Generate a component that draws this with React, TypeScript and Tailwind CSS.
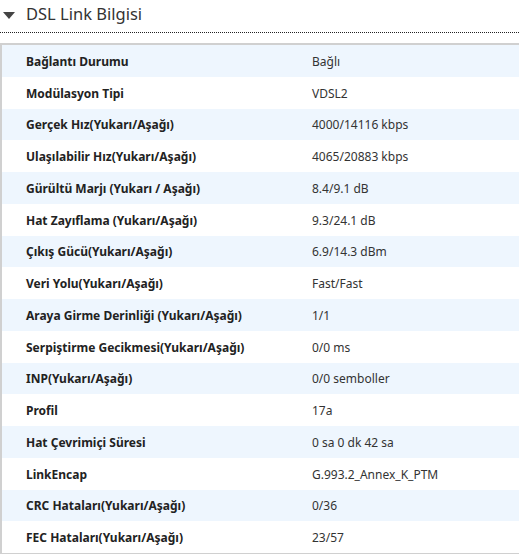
import React from "react";

const rows: [string, string][] = [
  ["Bağlantı Durumu", "Bağlı"],
  ["Modülasyon Tipi", "VDSL2"],
  ["Gerçek Hız(Yukarı/Aşağı)", "4000/14116 kbps"],
  ["Ulaşılabilir Hız(Yukarı/Aşağı)", "4065/20883 kbps"],
  ["Gürültü Marjı (Yukarı / Aşağı)", "8.4/9.1 dB"],
  ["Hat Zayıflama (Yukarı/Aşağı)", "9.3/24.1 dB"],
  ["Çıkış Gücü(Yukarı/Aşağı)", "6.9/14.3 dBm"],
  ["Veri Yolu(Yukarı/Aşağı)", "Fast/Fast"],
  ["Araya Girme Derinliği (Yukarı/Aşağı)", "1/1"],
  ["Serpiştirme Gecikmesi(Yukarı/Aşağı)", "0/0 ms"],
  ["INP(Yukarı/Aşağı)", "0/0 semboller"],
  ["Profil", "17a"],
  ["Hat Çevrimiçi Süresi", "0 sa 0 dk 42 sa"],
  ["LinkEncap", "G.993.2_Annex_K_PTM"],
  ["CRC Hataları(Yukarı/Aşağı)", "0/36"],
  ["FEC Hataları(Yukarı/Aşağı)", "23/57"],
];

export default function App() {
  return (
    <div
      className="w-[519px] h-[558px] bg-white overflow-hidden text-[#333]"
      style={{ fontFamily: '"Noto Sans", "Open Sans", sans-serif' }}
    >
      <div className="h-[33px] flex items-start border-b border-dotted border-[#222]">
        <svg width="12" height="7" viewBox="0 0 12 7" className="ml-[3px] mt-[12px]">
          <polygon points="0,0 12,0 6,7" fill="#444" />
        </svg>
        <span className="ml-[11px] mt-[5px] text-[16.5px] leading-[17px] text-[#333]">DSL Link Bilgisi</span>
      </div>
      <div className="mt-[10px] w-[530px] border-t-2 border-l-2 border-b border-[#d0d0d0]">
        {rows.map(([k, v], i) => (
          <div
            key={k}
            className={`h-[31.75px] flex items-center pt-[2px] text-[12px] ${i % 2 === 0 ? "bg-[#eef6fe]" : "bg-white"}`}
          >
            <div className="w-[310px] pl-[24px] font-bold text-[#222]">{k}</div>
            <div className="text-[#333]">{v}</div>
          </div>
        ))}
      </div>
    </div>
  );
}
